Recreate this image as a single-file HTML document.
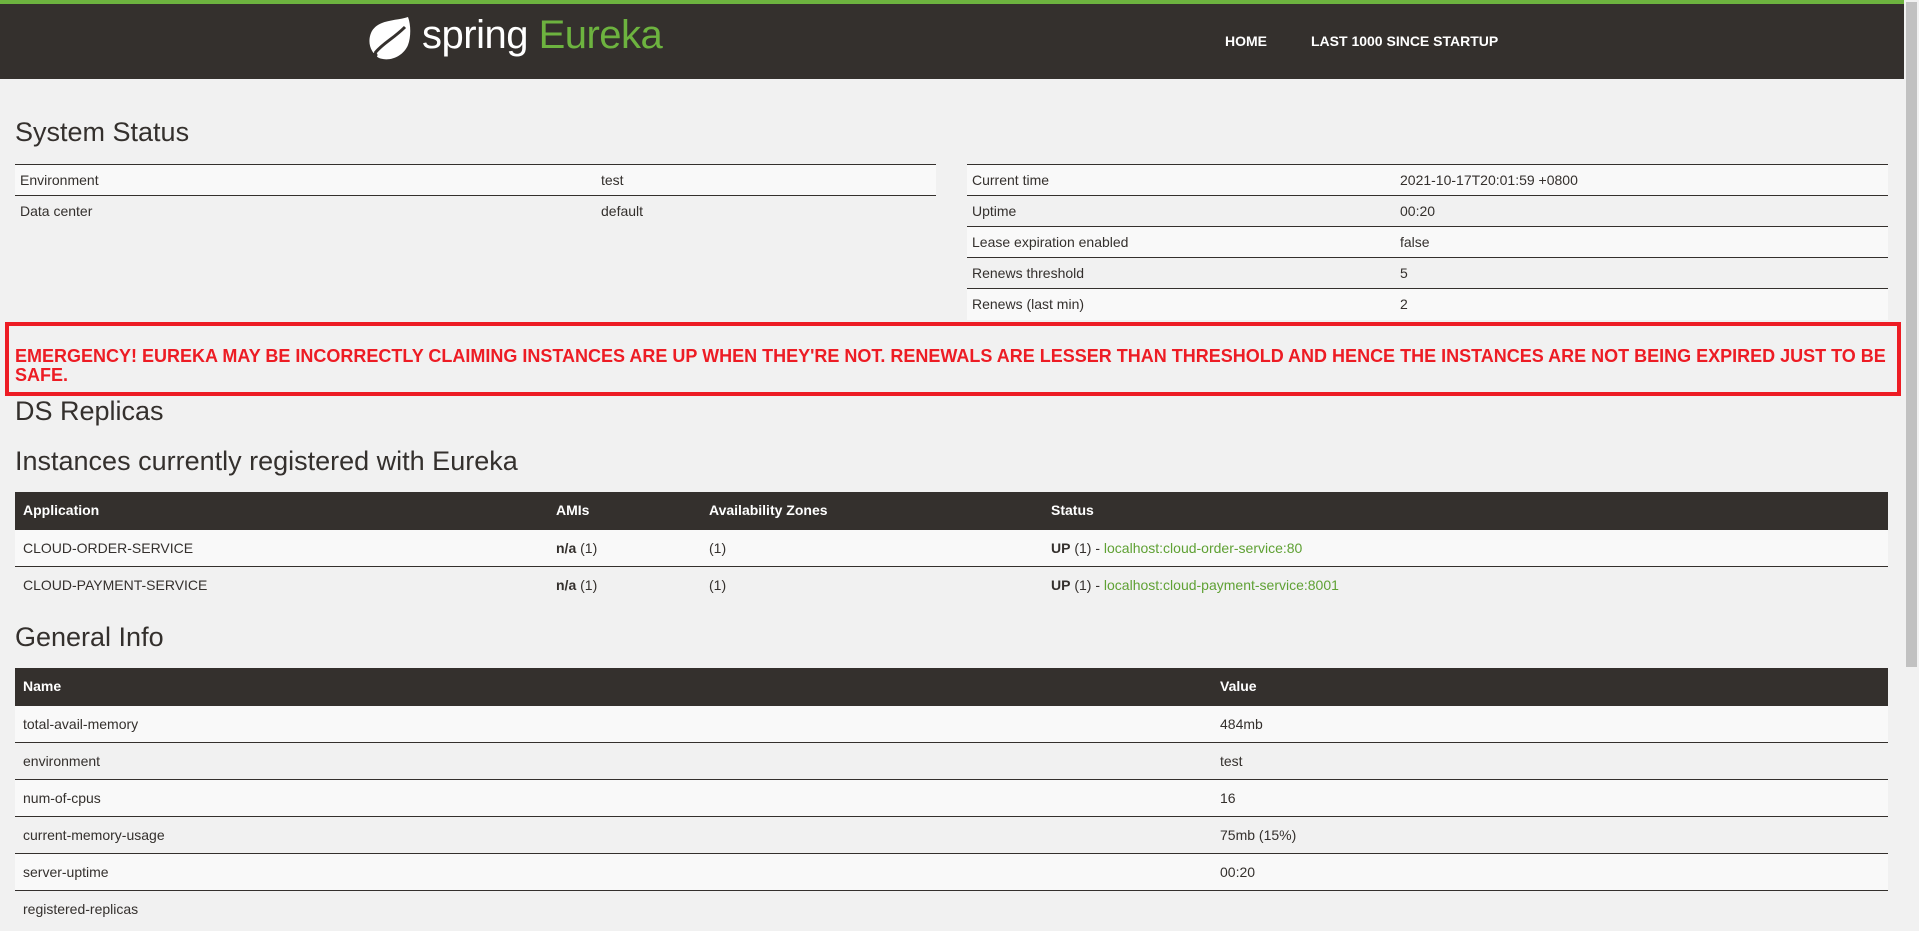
<!DOCTYPE html>
<html style="width:1919px;height:931px;overflow:hidden"><head><meta charset="utf-8"><style>
*{margin:0;padding:0;box-sizing:border-box}
body{width:1919px;height:931px;overflow:hidden;background:#f1f1f1;font-family:"Liberation Sans",sans-serif;color:#34302d;position:relative}
.abs{position:absolute}
.hdr{left:0;top:0;width:1904px;height:79px;background:#34302d;border-top:4px solid #6db33f}
.nav{color:#fff;font-weight:bold;font-size:14px;top:33px}
h2{position:absolute;font-weight:normal;font-size:27px;color:#34302d;left:15px}
table{position:absolute;border-collapse:collapse;font-size:14px}
td,th{text-align:left;padding:0 0 0 5px;vertical-align:middle}
.st td{height:31px;border-top:1px solid #34302d}
.st tr:nth-child(odd) td{background:#f9f9f9}
.it th{background:#34302d;color:#fff;height:37px;font-size:14px;padding-left:8px}
.it td{height:37px;border-top:1px solid #34302d;padding-left:8px}
.it tr:nth-child(even) td{background:#f9f9f9}
.g{color:#5fa134}
.sb{right:0;top:0;width:15px;height:931px;background:#f1f1f1}
.th{right:2px;top:2px;width:11px;height:665px;background:#c1c1c1}
</style></head><body>
<div class="abs hdr"></div>
<svg class="abs" style="left:367px;top:15px" width="46" height="46" viewBox="0 0 46 46">
<path d="M41 2 C30 6 10 4 4 18 C0 28 4 38 12 43 C22 47 36 42 41 30 C44 22 44 10 41 2 Z" fill="#fff"/>
<path d="M8 38 C16 28 26 24 38 12" stroke="#34302d" stroke-width="3" fill="none"/>
<circle cx="8" cy="40" r="2.5" fill="#34302d"/>
</svg>
<div class="abs" style="left:422px;top:13px;font-size:40px;color:#fff;letter-spacing:-0.5px">spring <span style="color:#6db33f">Eureka</span></div>
<div class="abs nav" style="left:1225px">HOME</div>
<div class="abs nav" style="left:1311px">LAST 1000 SINCE STARTUP</div>

<h2 style="top:117px">System Status</h2>
<table class="st" style="left:15px;top:164px;width:921px">
<tr><td style="width:581px">Environment</td><td>test</td></tr>
<tr><td style="border-top:1px solid #34302d">Data center</td><td>default</td></tr>
</table>
<table class="st" style="left:967px;top:164px;width:921px">
<tr><td style="width:428px">Current time</td><td>2021-10-17T20:01:59 +0800</td></tr>
<tr><td>Uptime</td><td>00:20</td></tr>
<tr><td>Lease expiration enabled</td><td>false</td></tr>
<tr><td>Renews threshold</td><td>5</td></tr>
<tr><td>Renews (last min)</td><td>2</td></tr>
</table>

<div class="abs" style="left:5px;top:322px;width:1896px;height:74px;border:4px solid #ed1c24"></div>
<div class="abs" style="left:15px;top:347px;width:1875px;color:#ed1c24;font-size:18px;font-weight:bold;line-height:19px">EMERGENCY! EUREKA MAY BE INCORRECTLY CLAIMING INSTANCES ARE UP WHEN THEY'RE NOT. RENEWALS ARE LESSER THAN THRESHOLD AND HENCE THE INSTANCES ARE NOT BEING EXPIRED JUST TO BE SAFE.</div>

<h2 style="top:396px">DS Replicas</h2>
<h2 style="top:446px">Instances currently registered with Eureka</h2>
<table class="it" style="left:15px;top:492px;width:1873px">
<tr><th style="width:533px">Application</th><th style="width:153px">AMIs</th><th style="width:342px">Availability Zones</th><th>Status</th></tr>
<tr><td>CLOUD-ORDER-SERVICE</td><td><b>n/a</b> (1)</td><td>(1)</td><td><b>UP</b> (1) - <span class="g">localhost:cloud-order-service:80</span></td></tr>
<tr><td>CLOUD-PAYMENT-SERVICE</td><td><b>n/a</b> (1)</td><td>(1)</td><td><b>UP</b> (1) - <span class="g">localhost:cloud-payment-service:8001</span></td></tr>
</table>

<h2 style="top:622px">General Info</h2>
<table class="it" style="left:15px;top:668px;width:1873px">
<tr><th style="width:1197px">Name</th><th>Value</th></tr>
<tr><td>total-avail-memory</td><td>484mb</td></tr>
<tr><td>environment</td><td>test</td></tr>
<tr><td>num-of-cpus</td><td>16</td></tr>
<tr><td>current-memory-usage</td><td>75mb (15%)</td></tr>
<tr><td>server-uptime</td><td>00:20</td></tr>
<tr><td>registered-replicas</td><td></td></tr>
</table>
<div class="abs sb"></div><div class="abs th"></div>
</body></html>
